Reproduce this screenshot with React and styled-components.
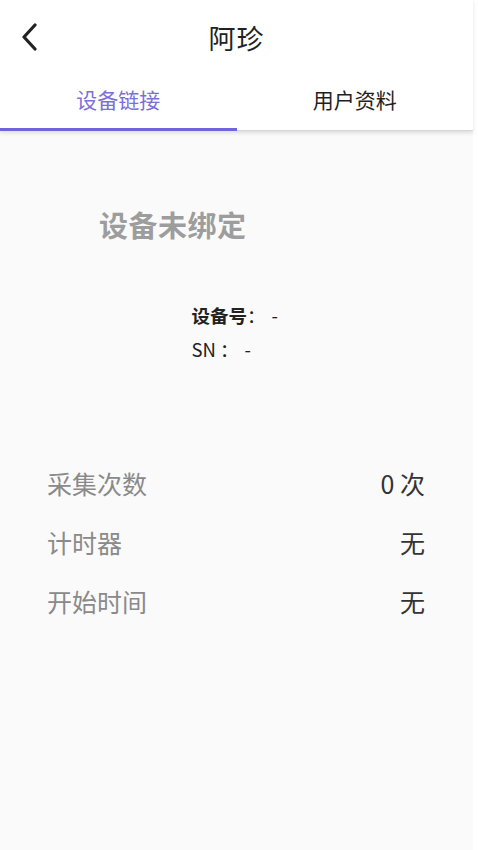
import React from "react";
import styled, { createGlobalStyle } from "styled-components";

const GlobalStyle = createGlobalStyle`
  html, body {
    margin: 0;
    padding: 0;
    background: #ffffff;
  }
  body {
    font-family: "Noto Sans CJK SC", "Noto Sans", sans-serif;
  }
`;

const Screen = styled.div`
  width: 473px;
  min-height: 850px;
  background: #fafafa;
  display: flex;
  flex-direction: column;
`;

const TopBar = styled.div`
  background: #ffffff;
  box-shadow: 0 2px 4px rgba(0, 0, 0, 0.12);
`;

const Header = styled.div`
  height: 75px;
  display: flex;
  align-items: center;
  justify-content: center;
  position: relative;
`;

const BackBtn = styled.div`
  position: absolute;
  left: 15px;
  top: 23px;
  width: 28px;
  height: 28px;
  display: flex;
  align-items: center;
  justify-content: center;
  cursor: pointer;
`;

const Title = styled.div`
  font-size: 27px;
  color: #222;
  letter-spacing: 1px;
`;

const Tabs = styled.div`
  display: flex;
  height: 56px;
`;

const Tab = styled.div`
  flex: 1;
  display: flex;
  align-items: center;
  justify-content: center;
  padding-bottom: 8px;
  box-sizing: border-box;
  font-size: 21px;
  color: ${(p) => (p.$active ? "#7a70d8" : "#1f1f1f")};
  box-shadow: ${(p) =>
    p.$active ? "inset 0 -3px 0 #7064de" : "inset 0 -1px 0 #d6d6d6"};
`;

const Body = styled.div`
  flex: 1;
  display: flex;
  flex-direction: column;
`;

const Status = styled.div`
  margin-top: 72px;
  padding-left: 99px;
  font-size: 29px;
  font-weight: 700;
  color: #9d9d9d;
  letter-spacing: 0.5px;
`;

const InfoBlock = styled.div`
  margin-top: 55px;
  align-self: center;
  width: 90px;
  display: flex;
  flex-direction: column;
  gap: 4px;
  font-size: 18.5px;
  color: #222;
`;

const InfoLine = styled.div`
  white-space: nowrap;
  line-height: 30px;
`;

const InfoKey = styled.span`
  font-weight: ${(p) => (p.$bold ? 700 : 400)};
`;

const Sep = styled.span`
  margin: 0 ${(p) => p.$gap || 0}px;
`;

const Stats = styled.div`
  margin-top: 89px;
  padding: 0 48px 0 47px;
  display: flex;
  flex-direction: column;
`;

const StatRow = styled.div`
  display: flex;
  justify-content: space-between;
  align-items: center;
  height: 59px;
`;

const Label = styled.span`
  font-size: 25px;
  color: #8a8a8a;
`;

const Value = styled.span`
  font-size: 25px;
  color: #333;
`;

const ChevronLeft = () => (
  <svg width="18" height="28" viewBox="0 0 18 28" fill="none">
    <path
      d="M15 2 L4 14 L15 26"
      stroke="#222"
      strokeWidth="3.2"
      strokeLinecap="round"
      strokeLinejoin="round"
    />
  </svg>
);

const stats = [
  { label: "采集次数", value: "0 次" },
  { label: "计时器", value: "无" },
  { label: "开始时间", value: "无" },
];

const App = () => {
  return (
    <>
      <GlobalStyle />
      <Screen>
        <TopBar>
          <Header>
            <BackBtn>
              <ChevronLeft />
            </BackBtn>
            <Title>阿珍</Title>
          </Header>
          <Tabs>
            <Tab $active>设备链接</Tab>
            <Tab>用户资料</Tab>
          </Tabs>
        </TopBar>
        <Body>
          <Status>设备未绑定</Status>
          <InfoBlock>
            <InfoLine>
              <InfoKey $bold>设备号</InfoKey>：<Sep $gap={6}>-</Sep>
            </InfoLine>
            <InfoLine>
              <InfoKey>SN</InfoKey>&nbsp;：<Sep $gap={6}>-</Sep>
            </InfoLine>
          </InfoBlock>
          <Stats>
            {stats.map((s) => (
              <StatRow key={s.label}>
                <Label>{s.label}</Label>
                <Value>{s.value}</Value>
              </StatRow>
            ))}
          </Stats>
        </Body>
      </Screen>
    </>
  );
};

export default App;
